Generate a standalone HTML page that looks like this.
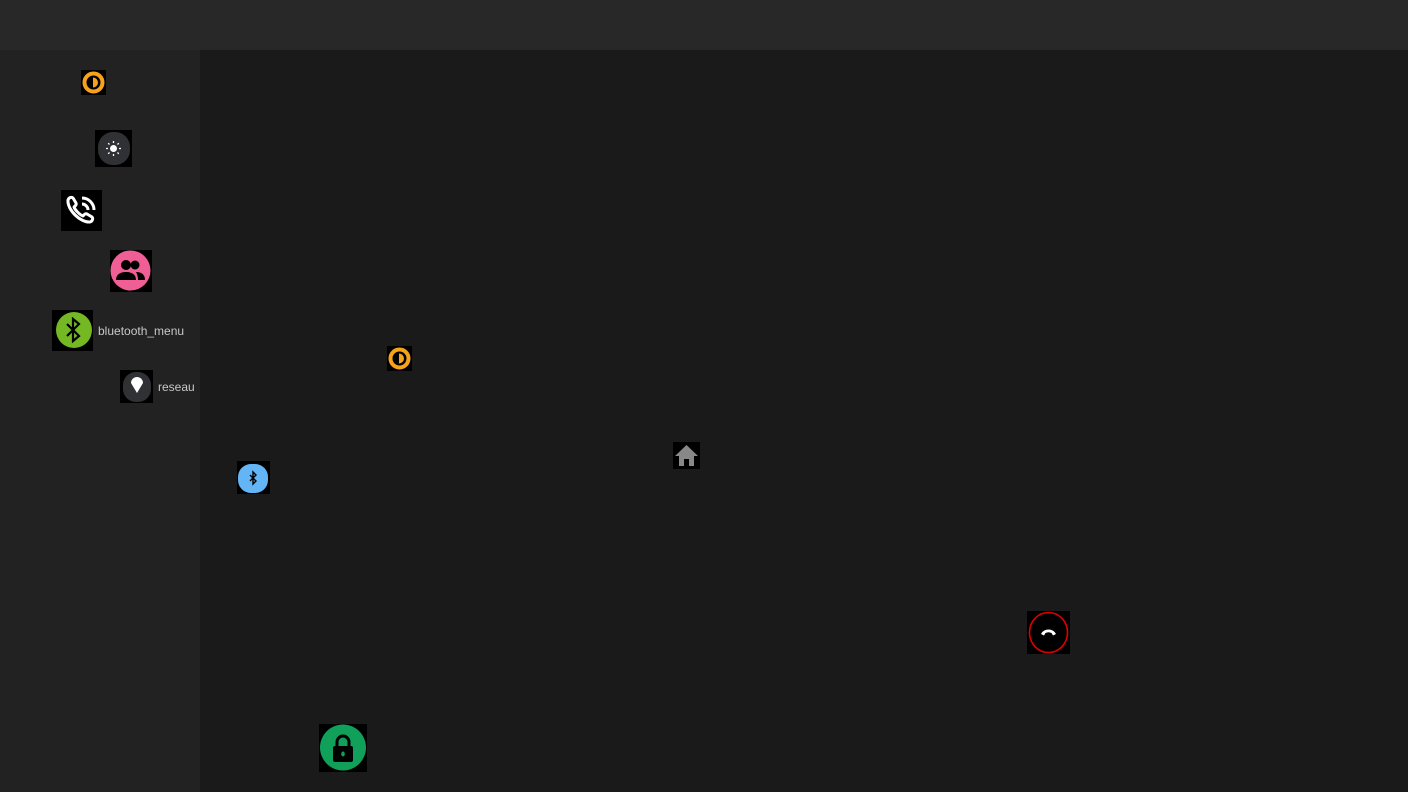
<!DOCTYPE html>
<html><head><style>
body{margin:0;width:1408px;height:792px;background:#1a1a1a;position:relative;overflow:hidden;font-family:"Liberation Sans",sans-serif}
.b{position:absolute;background:#000}
.b svg{position:absolute;left:0;top:0;width:100%;height:100%}
.t{position:absolute;color:#c8c8c8;font-size:12px;line-height:14px}
</style></head><body>
<div style="position:absolute;left:0;top:0;width:1408px;height:50px;background:#282828"></div>
<div style="position:absolute;left:0;top:50px;width:200px;height:742px;background:#222"></div>

<div class="b" style="left:81px;top:70px;width:25px;height:25px"><svg viewBox="0 0 25 25"><circle cx="12.5" cy="12.5" r="9" fill="none" stroke="#f7a21b" stroke-width="4"/><path d="M12 7.5a5 5 0 0 1 0 10z" fill="#f7a21b"/></svg></div>

<div class="b" style="left:95px;top:130px;width:37px;height:37px"><svg viewBox="0 0 37 37"><rect x="3" y="2" width="32" height="33" rx="15" fill="#2f3134"/><circle cx="18.5" cy="18.5" r="3.5" fill="#fff"/><g stroke="#fff" stroke-width="1.3"><path d="M18.5 11v2M18.5 24v2M11 18.5h2M24 18.5h2M13.2 13.2l1.3 1.3M22.5 22.5l1.3 1.3M13.2 23.8l1.3-1.3M22.5 14.5l1.3-1.3"/></g></svg></div>

<div class="b" style="left:61px;top:190px;width:41px;height:41px"><svg viewBox="0 0 41 41"><path d="M7 10c1-3 4-3 5-2l3 5c1 2-1 3-2 4 1 3 6 8 9 9 1-1 2-3 4-2l5 3c1 1 1 4-2 5-9 1-23-12-22-22z" fill="none" stroke="#fff" stroke-width="3" stroke-linejoin="round"/><path d="M21 8a12 12 0 0 1 12 12M21 14a6 6 0 0 1 6 6" fill="none" stroke="#fff" stroke-width="3"/></svg></div>

<div class="b" style="left:110px;top:250px;width:42px;height:42px"><svg viewBox="0 0 42 42"><circle cx="20.5" cy="20.5" r="20" fill="#ef5f96"/><circle cx="16" cy="15" r="5" fill="#000"/><path d="M6 30c0-6 5-8 10-8s10 2 10 8z" fill="#000"/><circle cx="25" cy="15" r="4.5" fill="#000"/><path d="M26 22c5 0 9 2 9 8h-7c0-4-1-6-2-8z" fill="#000"/></svg></div>

<div class="b" style="left:52px;top:310px;width:41px;height:41px"><svg viewBox="0 0 41 41"><circle cx="22" cy="20" r="18" fill="#74b823"/><path d="M15 14l12 12-6 5V9l6 5-12 12" fill="none" stroke="#000" stroke-width="2.2"/></svg></div>
<div class="t" style="left:98px;top:324px">bluetooth_menu</div>

<div class="b" style="left:120px;top:370px;width:33px;height:33px"><svg viewBox="0 0 33 33"><rect x="3" y="2" width="28" height="30" rx="13" fill="#2f3134"/><path d="M11 13a6 6 0 0 1 12 0l-6 10z" fill="#fff"/></svg></div>
<div class="t" style="left:158px;top:380px">reseau</div>

<div class="b" style="left:387px;top:346px;width:25px;height:25px"><svg viewBox="0 0 25 25"><circle cx="12.5" cy="12.5" r="9" fill="none" stroke="#f7a21b" stroke-width="4"/><path d="M12 7.5a5 5 0 0 1 0 10z" fill="#f7a21b"/></svg></div>

<div class="b" style="left:237px;top:461px;width:33px;height:33px"><svg viewBox="0 0 33 33"><rect x="1" y="3" width="30" height="29" rx="13" fill="#64b5f6"/><path d="M13 14l6 6-3 3v-12l3 3-6 6" fill="none" stroke="#000" stroke-width="1.4"/></svg></div>

<div class="b" style="left:673px;top:442px;width:27px;height:27px"><svg viewBox="0 0 27 27"><path d="M13.5 3L2 14h4v10h5v-7h5v7h5V14h4z" fill="#888"/></svg></div>

<div class="b" style="left:1027px;top:611px;width:43px;height:43px"><svg viewBox="0 0 43 43"><ellipse cx="21.5" cy="21.5" rx="19" ry="20" fill="none" stroke="#d00" stroke-width="1.6"/><path d="M14 23c3-6 12-6 15 0l-3 1.5-1.5-2.5c-2-1-4-1-6 0l-1.5 2.5z" fill="#fff"/></svg></div>

<div class="b" style="left:319px;top:724px;width:48px;height:48px"><svg viewBox="0 0 48 48"><ellipse cx="24" cy="23.5" rx="23" ry="23" fill="#10a05a"/><path d="M18 23v-5a6 6 0 0 1 12 0v5" fill="none" stroke="#000" stroke-width="3"/><rect x="14" y="22" width="20" height="16" rx="2" fill="#000"/><ellipse cx="24" cy="30" rx="1.8" ry="2.5" fill="#10a05a"/></svg></div>
</body></html>
